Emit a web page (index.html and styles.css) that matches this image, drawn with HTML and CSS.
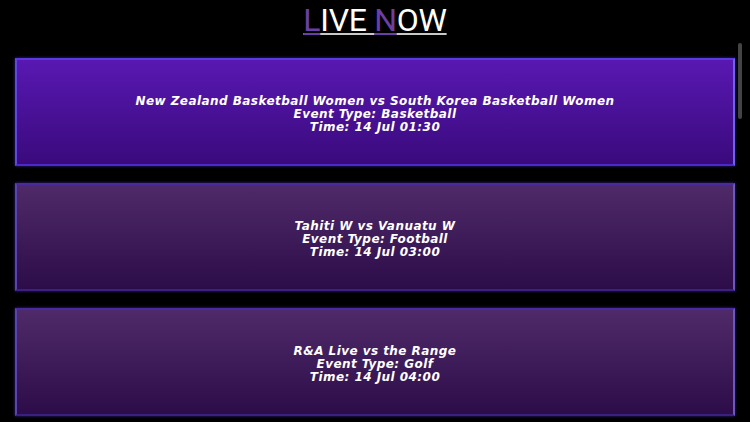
FILE: index.html
```html
<!DOCTYPE html>
<html lang="en">
<head>
<meta charset="utf-8">
<title>Live Now</title>
<link rel="stylesheet" href="styles.css">
</head>
<body>
<header class="header">
  <h1 class="title"><span class="accent">L</span>IVE <span class="accent">N</span>OW</h1>
</header>
<main class="list">
  <div class="card card-active">
    <p>New Zealand Basketball Women vs South Korea Basketball Women</p>
    <p>Event Type: Basketball</p>
    <p>Time: 14 Jul 01:30</p>
  </div>
  <div class="card">
    <p>Tahiti W vs Vanuatu W</p>
    <p>Event Type: Football</p>
    <p>Time: 14 Jul 03:00</p>
  </div>
  <div class="card">
    <p>R&amp;A Live vs the Range</p>
    <p>Event Type: Golf</p>
    <p>Time: 14 Jul 04:00</p>
  </div>
</main>
<div class="scrollbar"></div>
</body>
</html>
```
FILE: styles.css
```css
html, body {
  margin: 0;
  padding: 0;
  background: #000;
  height: 100%;
  overflow: hidden;
}
body {
  font-family: "DejaVu Sans", sans-serif;
}
.header {
  height: 58px;
  display: flex;
  justify-content: center;
}
.title {
  margin: 0;
  padding-top: 1px;
  font-family: Roboto, "Liberation Sans", sans-serif;
  font-weight: 400;
  font-size: 32px;
  line-height: 38px;
  letter-spacing: -0.3px;
  color: #fff;
  text-decoration: underline;
  text-decoration-color: #c8c8c8;
  text-decoration-thickness: 2px;
  text-underline-offset: 2px;
}
.accent {
  color: #6a3fa6;
  text-decoration: underline;
  text-decoration-color: #6a3fa6;
  text-decoration-thickness: 2px;
}
.list {
  display: flex;
  flex-direction: column;
  gap: 17px;
  padding: 0 15px;
}
.card {
  height: 108px;
  box-sizing: border-box;
  display: flex;
  flex-direction: column;
  justify-content: center;
  align-items: center;
  background: linear-gradient(#4f2a68, #2d0c4a);
  border: 2px solid #3a2080;
  border-left-color: #5a44b0;
  border-right-color: #6a58c0;
  border-top-color: #4a2aa0;
  box-shadow: 0 0 3px rgba(90, 60, 220, 0.6);
  padding-top: 4px;
}
.card-active {
  background: linear-gradient(#5818b2, #3a0a7c);
  border-color: #4a2acc;
  border-left-color: #5e48e0;
  border-right-color: #7060ee;
  border-top-color: #5a3ae0;
}
.card p {
  margin: 0;
  color: #fff;
  font-weight: bold;
  font-style: italic;
  font-size: 12px;
  line-height: 13px;
  letter-spacing: 0.45px;
  text-align: center;
}
.scrollbar {
  position: fixed;
  top: 43px;
  left: 738px;
  width: 4px;
  height: 76px;
  border-radius: 2px;
  background: #444;
}
```
